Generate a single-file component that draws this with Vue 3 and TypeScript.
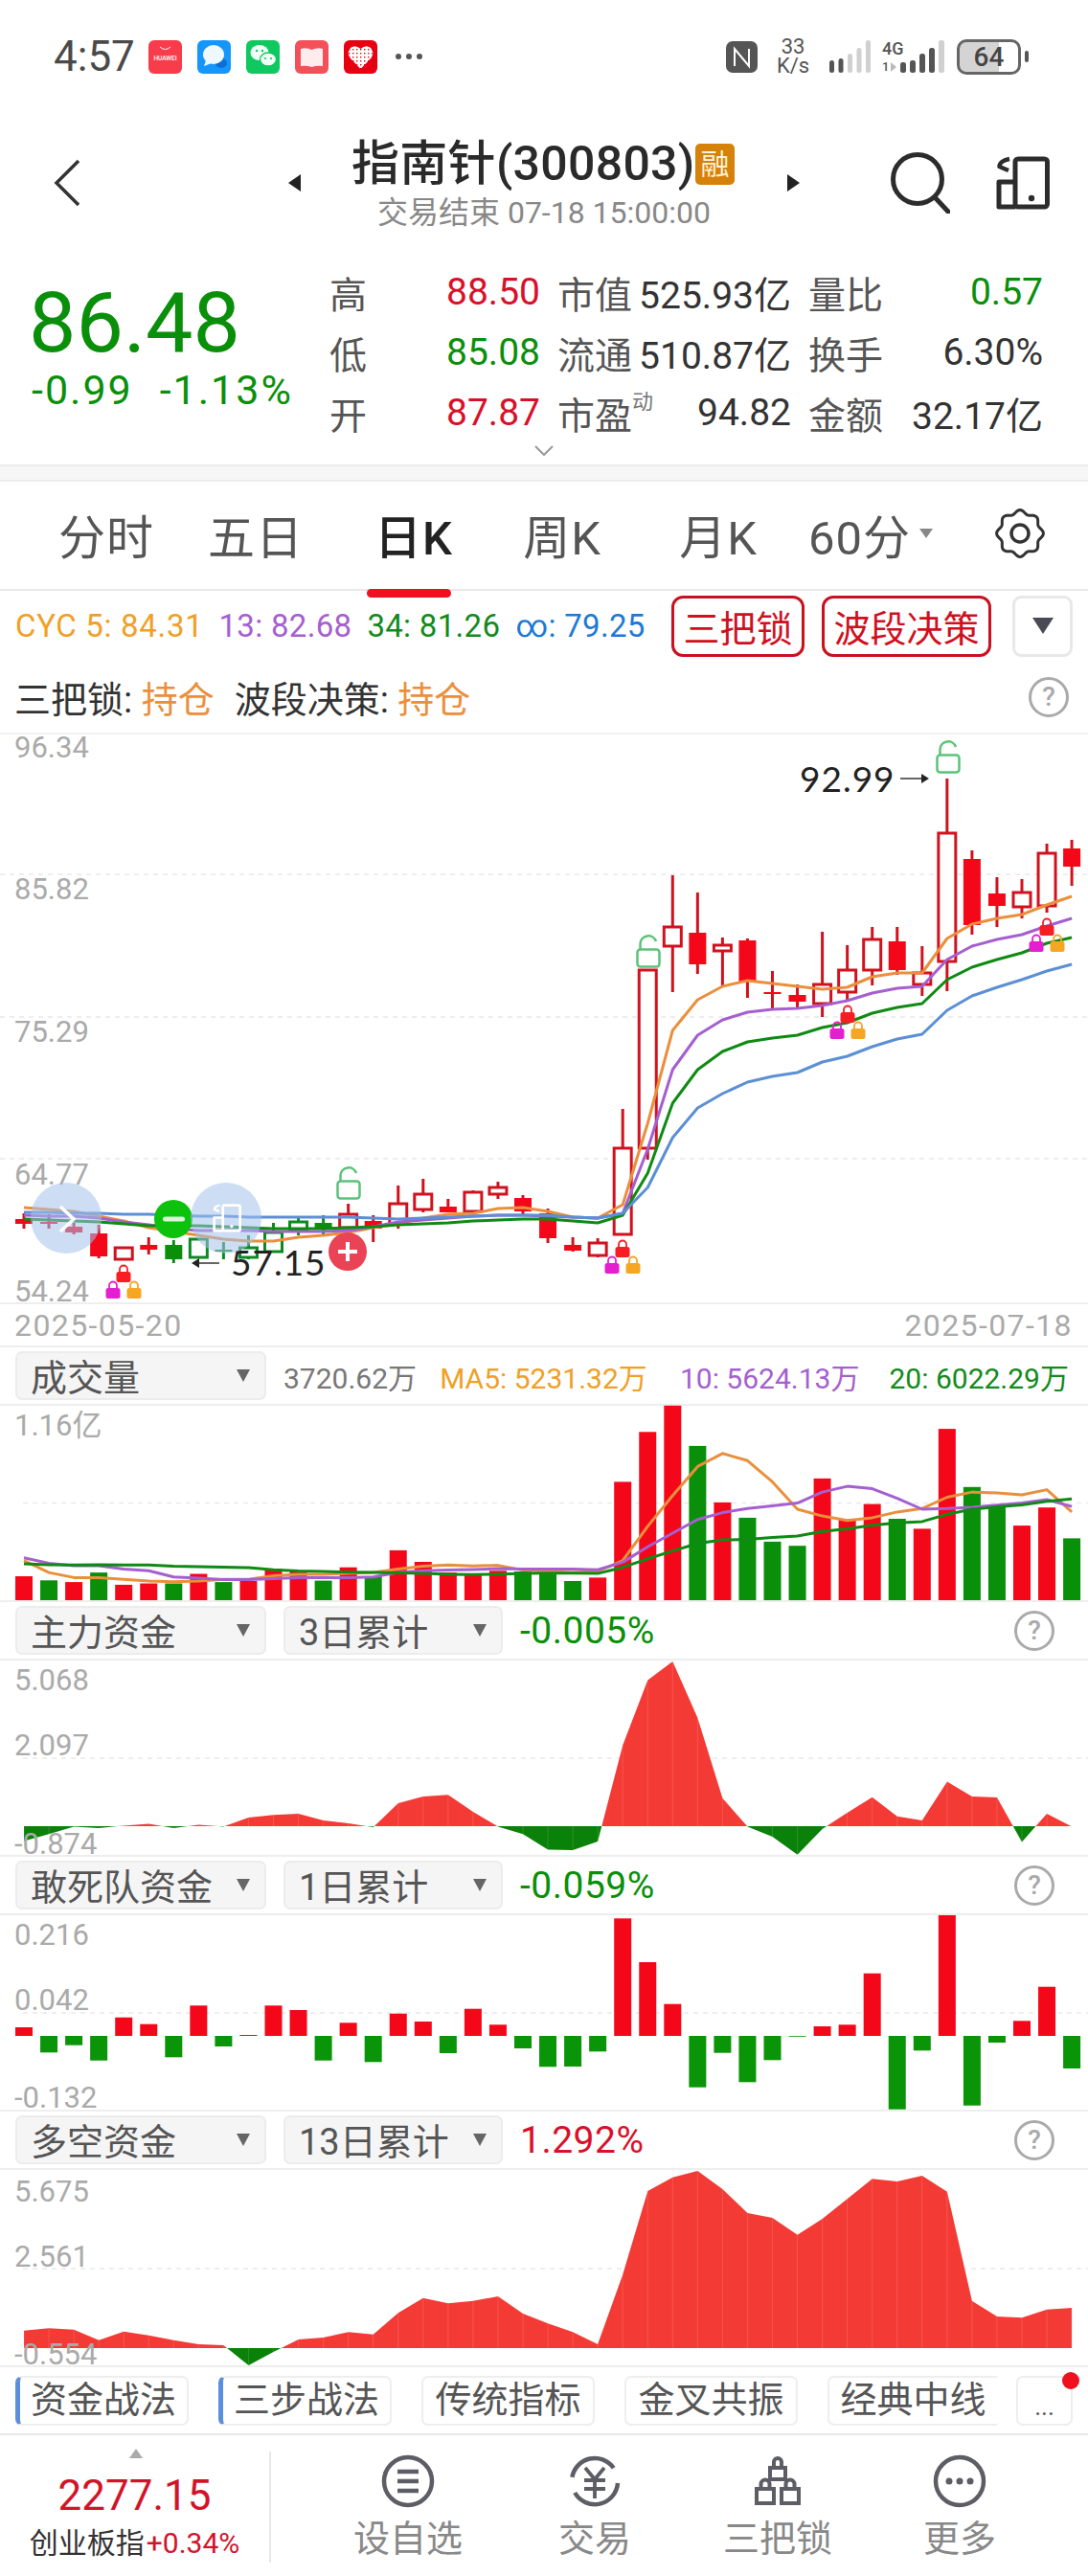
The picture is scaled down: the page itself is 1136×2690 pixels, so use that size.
<template>
  <div class="page">
    <!-- status bar -->
    <div class="status">
      <div class="status-left">
        <span class="clock">4:57</span>
        <svg class="app" viewBox="0 0 35 35"><rect width="35" height="35" rx="6" fill="#f93c4b" /><path d="M12 7q5.5 5 11 0" fill="none" stroke="#fff" stroke-width="1" /><text x="17.5" y="21" class="app-label">HUAWEI</text></svg>
        <svg class="app" viewBox="0 0 35 35"><rect width="35" height="35" rx="6" fill="#1596fb" /><ellipse cx="25" cy="24" rx="6" ry="5" fill="#0b6fd4" /><ellipse cx="17" cy="15" rx="11" ry="10" fill="#eef8ff" /><path d="M9 21l-2 6 8-3z" fill="#eef8ff" /></svg>
        <svg class="app" viewBox="0 0 35 35"><rect width="35" height="35" rx="6" fill="#0fc860" /><ellipse cx="14" cy="13" rx="9.5" ry="8" fill="#f2fff7" /><ellipse cx="23" cy="20" rx="8.5" ry="7" fill="#f2fff7" stroke="#0fc860" stroke-width="1.4" /><circle cx="11" cy="11" r="1.2" fill="#0fc860" /><circle cx="17" cy="11" r="1.2" fill="#0fc860" /><circle cx="20" cy="19" r="1.1" fill="#0fc860" /><circle cx="26" cy="19" r="1.1" fill="#0fc860" /></svg>
        <svg class="app" viewBox="0 0 35 35"><rect width="35" height="35" rx="6" fill="#f4505a" /><path d="M6 9q6-2 11.5 1q6-3 11.5-1v18q-6-1-11.5 1q-5.5-2-11.5-1z" fill="#ffeced" /></svg>
        <svg class="app" viewBox="0 0 35 35">
          <defs><pattern id="pdd" width="4" height="4" patternUnits="userSpaceOnUse"><rect width="4" height="4" fill="#fff" /><rect x="1" y="1" width="1.4" height="1.4" fill="#e60012" /></pattern></defs>
          <rect width="35" height="35" rx="6" fill="#e60012" />
          <path d="M17.5 30L6 18Q3 12 7 8q5-4 10.5 1q5.5-5 10.5-1q4 4 1 10z" fill="url(#pdd)" />
        </svg>
        <span class="more-dots"><i /><i /><i /></span>
      </div>
      <div class="status-right">
        <svg class="nfc" viewBox="0 0 33 33"><rect width="33" height="33" rx="7" fill="#555" /><path d="M9 26V8l15 18V8" fill="none" stroke="#fff" stroke-width="2" /></svg>
        <div class="speed"><span>33</span><span>K/s</span></div>
        <svg class="signal" viewBox="0 0 44 36"><rect v-for="b in signalA" :key="b.x" :x="b.x" :y="35 - b.h" width="5" :height="b.h" rx="2.5" :fill="b.on ? '#555' : '#d0d0d0'" /></svg>
        <div class="net">
          <span class="net-4g">4G</span>
          <span class="net-sub">1<i /></span>
        </div>
        <svg class="signal second" viewBox="0 0 46 36"><rect v-for="b in signalB" :key="b.x" :x="b.x" :y="35 - b.h" width="6" :height="b.h" rx="2.5" :fill="b.on ? '#555' : '#d0d0d0'" /></svg>
        <div class="battery"><span>64</span></div>
        <div class="battery-nib" />
      </div>
    </div>

    <!-- stock title -->
    <header class="nav">
      <svg class="back" viewBox="0 0 28 50"><path d="M26 2L3 25l23 23" fill="none" stroke="#333" stroke-width="3.5" /></svg>
      <svg class="tri-left" viewBox="0 0 13 18"><path d="M13 0v18L0 9z" fill="#222" /></svg>
      <div class="title-block">
        <div class="title-row"><span class="title">指南针(300803)</span><span class="badge">融</span></div>
        <div class="subtitle">交易结束 07-18 15:00:00</div>
      </div>
      <svg class="tri-right" viewBox="0 0 13 18"><path d="M0 0v18l13-9z" fill="#222" /></svg>
      <svg class="search" viewBox="0 0 62 64"><circle cx="28" cy="28" r="25.5" fill="none" stroke="#2c2c2c" stroke-width="5" /><path d="M46 47l14 15" stroke="#2c2c2c" stroke-width="5" stroke-linecap="round" /></svg>
      <svg class="phone" viewBox="0 0 56 56"><use href="#phone-glyph" /></svg>
    </header>

    <svg width="0" height="0" class="defs">
      <symbol id="phone-glyph" viewBox="0 0 56 56">
        <g fill="none" stroke="currentColor" stroke-width="5" stroke-linejoin="round">
          <rect x="20" y="3" width="33.5" height="50" rx="3" />
          <path d="M20 27H3v26h17" />
          <path d="M14 3C8 4 3.5 7 3.5 11L13 15" stroke-width="4.5" />
        </g>
        <circle cx="37" cy="44" r="3.2" fill="currentColor" />
      </symbol>
    </svg>

    <!-- quote summary -->
    <section class="quote">
      <div class="quote-main">
        <div class="price-col">
          <div class="price">86.48</div>
          <div class="change"><span>-0.99</span><span>-1.13%</span></div>
        </div>
        <div class="quote-grid">
          <div v-for="c in quoteCells" :key="c.label" class="cell">
            <span class="cell-label">{{ c.label }}<sup v-if="c.sup">{{ c.sup }}</sup></span>
            <span class="cell-value" :class="c.tone">{{ c.value }}</span>
          </div>
        </div>
      </div>
      <svg class="expand" viewBox="0 0 20 11"><path d="M1 1l9 9 9-9" fill="none" stroke="#999" stroke-width="2" /></svg>
    </section>
    <div class="band" />

    <!-- period tabs -->
    <nav class="tabs">
      <div v-for="t in periods" :key="t" class="tab"><span :class="{ active: t === '日K' }">{{ t }}</span></div>
      <div class="tab"><span>60分</span><i class="caret" /></div>
      <svg class="gear" viewBox="0 0 52 52"><path :d="gearPath" fill="none" stroke="#333" stroke-width="3" /><circle cx="26" cy="26" r="9" fill="none" stroke="#333" stroke-width="3.5" /></svg>
    </nav>

    <!-- indicators -->
    <div class="ind-row">
      <div class="ma-group">
        <span class="c-orange cyc">CYC 5: 84.31</span>
        <span class="c-purple">13: 82.68</span>
        <span class="c-green">34: 81.26</span>
        <span class="c-blue">∞: 79.25</span>
      </div>
      <button class="red-btn three">三把锁</button>
      <button class="red-btn four">波段决策</button>
      <button class="drop-btn"><i /></button>
    </div>
    <div class="signal-row">
      <span>三把锁: <b>持仓</b></span>
      <span>波段决策: <b>持仓</b></span>
      <span class="help">?</span>
    </div>

    <!-- candle chart -->
    <svg class="chart main" viewBox="0 767 1136 593">
      <line v-for="y in [913, 1062, 1210]" :key="y" x1="0" x2="1136" :y1="y" :y2="y" class="dash" />
      <g v-for="(k, i) in candles" :key="i" :class="k[5] === 'r' ? 'k-red' : 'k-green'">
        <line :x1="xAt(i)" :x2="xAt(i)" :y1="k[2]" :y2="k[3]" class="wick" />
        <rect v-if="k[4]" :x="xAt(i) - 9" :y="k[0]" width="18" :height="k[1] - k[0]" class="hollow" />
        <rect v-else :x="xAt(i) - 9" :y="k[0]" width="18" :height="k[1] - k[0]" class="solid" />
      </g>
      <polyline v-for="l in mainLines" :key="l.color" :points="l.pts" :stroke="l.color" class="ma-line" />

      <g v-for="g in lockGroups" :key="g.x">
        <g v-for="l in lockTrio(g.x, g.y)" :key="l.c" :transform="`translate(${l.x - 7.5} ${l.y})`">
          <path d="M3.5 9V5.5a4 4 0 0 1 8 0V9" fill="none" :stroke="l.c" stroke-width="1.8" />
          <rect x="0" y="8" width="15" height="11" rx="2.5" :fill="l.c" />
        </g>
      </g>
      <g v-for="o in openLocks" :key="o.x" :transform="`translate(${o.x} ${o.y})`" fill="none" stroke="#5cc27a" stroke-width="2.5">
        <rect x="1.5" y="15.5" width="23" height="18" rx="3" />
        <path d="M4.5 15V9.5a8.5 8.5 0 0 1 16.5-2.5" />
      </g>

      <text x="835" y="827" class="extreme">92.99</text>
      <path d="M940 813h23" stroke="#333" stroke-width="1.5" /><path d="M962 808l8 5-8 5z" fill="#222" />
      <text x="241" y="1332" class="extreme">57.15</text>
      <path d="M207 1319h22" stroke="#333" stroke-width="1.5" /><path d="M208 1314l-8 5 8 5z" fill="#222" />

      <text v-for="a in mainAxis" :key="a.t" x="15" :y="a.y" class="axis">{{ a.t }}</text>

      <circle cx="69" cy="1272" r="37" fill="#a3c1eb" opacity="0.55" />
      <path d="M63 1260l14 13-14 13" fill="none" stroke="#fff" stroke-width="3.5" />
      <circle cx="181" cy="1273" r="20" fill="#0cc20c" />
      <rect x="170" y="1270.5" width="23" height="5" rx="2.5" fill="#fff" opacity="0.85" />
      <circle cx="236" cy="1272" r="37" fill="#a3c1eb" opacity="0.55" />
      <svg x="222" y="1257" width="30" height="30" viewBox="0 0 56 56" color="#fff"><use href="#phone-glyph" /></svg>
      <circle cx="363" cy="1307" r="20" fill="#ea4355" />
      <path d="M363 1297v20M353 1307h20" stroke="#fff" stroke-width="4" />
    </svg>
    <div class="dates"><span>2025-05-20</span><span>2025-07-18</span></div>

    <!-- volume -->
    <div class="panel-head">
      <div class="combo w1"><span>成交量</span><i /></div>
      <div class="vol-values">
        <span class="c-gray">3720.62万</span>
        <span class="c-orange">MA5: 5231.32万</span>
        <span class="c-purple">10: 5624.13万</span>
        <span class="c-green">20: 6022.29万</span>
      </div>
    </div>
    <svg class="chart vol" viewBox="0 1467 1136 203">
      <line x1="24" x2="1136" y1="1568.5" y2="1568.5" class="dash" />
      <rect v-for="(b, i) in volBars" :key="i" :x="xAt(i) - 9" :y="b.y" width="18" :height="1670 - b.y" :fill="b.up ? '#f5071a' : '#0a8f0a'" />
      <polyline v-for="l in volLines" :key="l.color" :points="l.pts" :stroke="l.color" class="vol-line" />
      <text x="15" y="1498" class="axis">1.16亿</text>
    </svg>

    <!-- capital flow panels -->
    <template v-for="p in panels" :key="p.name">
      <div class="panel-head">
        <div class="combo w1"><span>{{ p.name }}</span><i /></div>
        <div class="combo w2"><span>{{ p.period }}</span><i /></div>
        <span class="panel-value" :class="p.up ? 'c-red' : 'c-deep-green'">{{ p.value }}</span>
        <span class="help panel-help">?</span>
      </div>
      <svg class="chart" :style="{ height: p.height + 'px' }" :viewBox="`0 ${p.top} 1136 ${p.height}`">
        <line x1="24" x2="1136" :y1="p.dash" :y2="p.dash" class="dash" />
        <template v-if="p.kind === 'area'">
          <clipPath :id="`${p.id}-up`"><rect x="0" :y="p.top" width="1136" :height="p.zero - p.top" /></clipPath>
          <clipPath :id="`${p.id}-down`"><rect x="0" :y="p.zero" width="1136" :height="p.top + p.height - p.zero" /></clipPath>
          <path :d="areaPath(p.ys, p.zero)" fill="#f43a35" :clip-path="`url(#${p.id}-up)`" />
          <path :d="areaPath(p.ys, p.zero)" fill="#0a8108" :clip-path="`url(#${p.id}-down)`" />
          <line v-for="(y, i) in p.ys" :key="i" :x1="xAt(i)" :x2="xAt(i)" :y1="y" :y2="p.zero" stroke="#fff" stroke-opacity="0.14" />
        </template>
        <template v-else>
          <rect v-for="(y, i) in p.ys" :key="i" :x="xAt(i) - 9" :y="Math.min(y, p.zero)" width="18" :height="Math.max(Math.abs(y - p.zero), 0.8)" :fill="y < p.zero ? '#f5071a' : '#0a9408'" />
        </template>
        <text v-for="a in p.axis" :key="a.t" x="15" :y="a.y" class="axis">{{ a.t }}</text>
      </svg>
    </template>

    <!-- strategy tabs -->
    <div class="strategies">
      <button v-for="s in strategies" :key="s.t" class="strategy" :class="{ marked: s.marked, open: s.open }">{{ s.t }}</button>
      <button class="strategy ellipsis">...<i class="dot" /></button>
    </div>

    <!-- footer -->
    <footer class="footer">
      <div class="index">
        <i class="index-up" />
        <div class="index-value">2277.15</div>
        <div class="index-name">创业板指<span>+0.34%</span></div>
      </div>
      <div class="actions">
        <div class="action">
          <svg viewBox="0 0 56 56"><circle cx="28" cy="28" r="25" /><path d="M17 18h22M17 28h22M17 38h22" stroke-width="4.5" /></svg>
          <span>设自选</span>
        </div>
        <div class="action">
          <svg viewBox="0 0 56 56"><path d="M47.7 14.2A24 24 0 0 0 4.4 23.8" /><path d="M52 30A24 24 0 0 1 7.2 40" /><path d="M18 14l10 12 10-12M17 27h22M17 36h22M28 26v20" stroke-width="3.8" /></svg>
          <span>交易</span>
        </div>
        <div class="action">
          <svg viewBox="0 0 56 56"><path d="M20 14h16v12H20zM24 14V8a4 4 0 0 1 8 0v6M6 36h18v15H6zM10.5 36v-5a4.5 4.5 0 0 1 9 0v5M32 36h18v15H32zM36.5 36v-5a4.5 4.5 0 0 1 9 0v5" stroke-width="4" /></svg>
          <span>三把锁</span>
        </div>
        <div class="action">
          <svg viewBox="0 0 56 56"><circle cx="28" cy="28" r="25" /><circle cx="17" cy="28" r="3.5" class="dotfill" /><circle cx="28" cy="28" r="3.5" class="dotfill" /><circle cx="39" cy="28" r="3.5" class="dotfill" /></svg>
          <span>更多</span>
        </div>
      </div>
    </footer>
  </div>
</template>

<script setup lang="ts">
type Candle = [number, number, number, number, number, 'r' | 'g']

const xAt = (i: number) => 25 + 26.05 * i

const signalA = [
  { x: 0, h: 13, on: true }, { x: 9.5, h: 15, on: true }, { x: 19, h: 20, on: false },
  { x: 28.5, h: 26, on: false }, { x: 38, h: 34, on: false },
]
const signalB = [
  { x: 0, h: 11, on: true }, { x: 10, h: 13, on: true }, { x: 20, h: 20, on: true },
  { x: 30, h: 26, on: true }, { x: 40, h: 34, on: false },
]

const quoteCells = [
  { label: '高', value: '88.50', tone: 'c-red' },
  { label: '市值', value: '525.93亿', tone: '' },
  { label: '量比', value: '0.57', tone: 'c-deep-green' },
  { label: '低', value: '85.08', tone: 'c-deep-green' },
  { label: '流通', value: '510.87亿', tone: '' },
  { label: '换手', value: '6.30%', tone: '' },
  { label: '开', value: '87.87', tone: 'c-red' },
  { label: '市盈', sup: '动', value: '94.82', tone: '' },
  { label: '金额', value: '32.17亿', tone: '' },
]

const periods = ['分时', '五日', '日K', '周K', '月K']

const gearPath = Array.from({ length: 120 }, (_, i) => {
  const a = (i / 120) * Math.PI * 2
  const r = 22.5 + 1.9 * Math.cos(8 * a)
  return `${i ? 'L' : 'M'}${(26 + r * Math.cos(a)).toFixed(2)} ${(26 + r * Math.sin(a)).toFixed(2)}`
}).join('') + 'Z'

// body top, body bottom, wick top, wick bottom, hollow, colour
const candles: Candle[] = [
  [1273, 1278, 1267, 1283, 0, 'r'], [1276, 1278, 1268, 1283, 0, 'r'], [1281, 1287, 1277, 1289, 0, 'r'],
  [1288, 1312, 1279, 1314, 0, 'r'], [1303, 1315, 1303, 1315, 1, 'r'], [1300, 1305, 1292, 1310, 0, 'r'],
  [1300, 1315, 1295, 1319, 0, 'g'], [1294, 1313, 1294, 1313, 1, 'g'], [1305, 1307, 1297, 1315, 0, 'g'],
  [1303, 1313, 1290, 1315, 1, 'g'], [1287, 1307, 1277, 1307, 1, 'g'], [1276, 1285, 1272, 1290, 1, 'g'],
  [1277, 1283, 1269, 1289, 0, 'g'], [1268, 1282, 1257, 1282, 1, 'r'], [1275, 1283, 1269, 1297, 0, 'r'],
  [1257, 1278, 1238, 1283, 1, 'r'], [1247, 1263, 1231, 1266, 1, 'r'], [1260, 1266, 1252, 1266, 0, 'r'],
  [1245, 1265, 1243, 1265, 1, 'r'], [1240, 1247, 1234, 1252, 1, 'r'], [1251, 1265, 1248, 1268, 0, 'r'],
  [1267, 1293, 1262, 1298, 0, 'r'], [1300, 1306, 1292, 1307, 0, 'r'], [1298, 1311, 1293, 1313, 1, 'r'],
  [1199, 1289, 1158, 1289, 1, 'r'], [1013, 1199, 1013, 1211, 1, 'r'], [968, 988, 914, 1036, 1, 'r'],
  [974, 1007, 932, 1017, 0, 'r'], [987, 993, 979, 1030, 1, 'r'], [982, 1025, 980, 1042, 0, 'r'],
  [1036, 1038, 1014, 1053, 0, 'r'], [1039, 1046, 1028, 1052, 0, 'r'], [1028, 1048, 973, 1062, 1, 'r'],
  [1013, 1036, 987, 1045, 1, 'r'], [981, 1013, 968, 1029, 1, 'r'], [983, 1013, 968, 1018, 0, 'r'],
  [1016, 1028, 988, 1040, 1, 'r'], [870, 1004, 813, 1035, 1, 'r'], [897, 966, 888, 976, 0, 'r'],
  [933, 946, 916, 968, 0, 'r'], [932, 947, 918, 959, 1, 'r'], [891, 946, 881, 953, 1, 'r'],
  [886, 905, 877, 925, 0, 'r'],
]

const toPoints = (ys: number[]) => ys.map((y, i) => `${xAt(i).toFixed(1)},${y}`).join(' ')

const mainLines = [
  { color: '#ea8f3c', pts: toPoints([1261, 1263, 1265, 1270, 1275, 1282, 1286, 1290, 1294, 1296, 1296, 1292, 1290, 1287, 1282, 1278, 1272, 1268, 1267, 1262, 1261, 1265, 1271, 1272, 1258, 1173, 1076, 1044, 1030, 1024, 1027, 1030, 1033, 1031, 1020, 1016, 1016, 980, 965, 959, 955, 945, 936]) },
  { color: '#a55fd0', pts: toPoints([1269, 1270, 1270, 1272, 1276, 1279, 1283, 1285, 1285, 1285, 1286, 1286, 1286, 1285, 1281, 1276, 1274, 1272, 1270, 1269, 1269, 1270, 1271, 1272, 1267, 1200, 1117, 1081, 1065, 1057, 1054, 1053, 1050, 1045, 1037, 1032, 1030, 1002, 988, 981, 976, 967, 959]) },
  { color: '#0f8a14', pts: toPoints([1273, 1274, 1275, 1276, 1278, 1280, 1280, 1280, 1281, 1282, 1283, 1283, 1283, 1282, 1281, 1279, 1278, 1277, 1275, 1274, 1273, 1273, 1275, 1277, 1269, 1225, 1152, 1117, 1098, 1088, 1084, 1081, 1073, 1068, 1058, 1052, 1048, 1023, 1010, 1002, 995, 985, 979]) },
  { color: '#5b8fd6', pts: toPoints([1266, 1266, 1267, 1267, 1268, 1268, 1269, 1270, 1270, 1271, 1271, 1271, 1271, 1271, 1272, 1273, 1272, 1271, 1270, 1269, 1269, 1269, 1271, 1272, 1267, 1240, 1188, 1157, 1142, 1130, 1124, 1120, 1109, 1103, 1093, 1085, 1080, 1055, 1040, 1031, 1023, 1014, 1007]) },
]

const mainAxis = [
  { t: '96.34', y: 791 }, { t: '85.82', y: 939 }, { t: '75.29', y: 1088 },
  { t: '64.77', y: 1237 }, { t: '54.24', y: 1359 },
]

const lockGroups = [
  { x: 129, y: 1320 }, { x: 650, y: 1294 }, { x: 885, y: 1049 }, { x: 1093, y: 958 },
]
const lockTrio = (x: number, y: number) => [
  { c: '#f81d22', x, y },
  { c: '#e41fd0', x: x - 11, y: y + 17 },
  { c: '#f5a623', x: x + 11, y: y + 17 },
]
const openLocks = [{ x: 351, y: 1218 }, { x: 664, y: 976 }, { x: 977, y: 773 }]

const volY = (v: number) => +(1400 + v / 2.8).toFixed(1)
const volTops: [number, boolean][] = [
  [686, true], [698, false], [703, true], [675, false], [711, true], [707, true], [707, false], [679, true],
  [703, false], [700, true], [664, true], [672, true], [699, false], [660, true], [686, false], [610, true],
  [644, true], [675, true], [680, true], [670, true], [672, false], [675, false], [700, false], [690, true],
  [410, true], [264, true], [187, true], [305, false], [470, true], [515, false], [585, false], [597, false],
  [400, true], [520, true], [475, true], [518, false], [547, true], [255, true], [425, false], [480, false],
  [538, true], [485, true], [575, false],
]
const volBars = volTops.map(([v, up]) => ({ y: volY(v), up }))
const volLines = [
  { color: '#ea8f3c', pts: toPoints([640, 675, 690, 690, 695, 700, 702, 700, 695, 695, 685, 680, 680, 678, 675, 665, 657, 653, 656, 654, 668, 672, 675, 672, 640, 540, 450, 365, 327, 348, 410, 490, 510, 523, 515, 498, 488, 455, 440, 442, 448, 433, 498].map(volY)) },
  { color: '#a55fd0', pts: toPoints([632, 648, 655, 655, 665, 670, 688, 692, 696, 696, 693, 690, 690, 690, 688, 675, 670, 668, 666, 664, 665, 665, 665, 667, 645, 600, 560, 520, 500, 488, 480, 472, 440, 423, 430, 458, 490, 488, 484, 478, 472, 462, 482].map(volY)) },
  { color: '#0f8a14', pts: toPoints([650, 652, 653, 652, 653, 653, 657, 658, 659, 661, 667, 671, 672, 674, 675, 676, 678, 680, 681, 680, 678, 677, 677, 678, 660, 635, 612, 590, 580, 578, 573, 568, 555, 547, 537, 530, 526, 505, 490, 483, 477, 467, 460].map(volY)) },
]

const flowA = [1460, 1440, 1418, 1422, 1415, 1410, 1422, 1413, 1418, 1392, 1384, 1380, 1400, 1408, 1420, 1350, 1330, 1325, 1375, 1418, 1440, 1485, 1487, 1462, 1180, 990, 935, 1100, 1335, 1418, 1448, 1500, 1425, 1378, 1332, 1388, 1400, 1287, 1330, 1333, 1463, 1380, 1418]
const flowB = [468, 547, 524, 572, 437, 458, 562, 400, 528, 492, 400, 414, 572, 454, 577, 425, 450, 549, 410, 460, 534, 592, 591, 544, 127, 264, 395, 656, 548, 640, 571, 497, 465, 460, 299, 725, 541, 117, 713, 516, 448, 341, 597]
const flowC = [1415, 1408, 1412, 1445, 1418, 1430, 1445, 1458, 1461, 1524, 1482, 1443, 1437, 1420, 1427, 1360, 1313, 1330, 1322, 1308, 1362, 1393, 1420, 1458, 1240, 978, 935, 915, 972, 1047, 1062, 1115, 1065, 1003, 940, 948, 930, 980, 1322, 1371, 1375, 1349, 1344]
const lowerY = (v: number) => +(1960 + v / 3).toFixed(1)

const panels = [
  {
    id: 'main-flow', name: '主力资金', period: '3日累计', value: '-0.005%', up: false, kind: 'area',
    top: 1733, height: 203, zero: 1906, dash: 1835, ys: flowA.map(volY),
    axis: [{ t: '5.068', y: 1764 }, { t: '2.097', y: 1832 }, { t: '-0.874', y: 1935 }],
  },
  {
    id: 'dare-flow', name: '敢死队资金', period: '1日累计', value: '-0.059%', up: false, kind: 'bars',
    top: 1999, height: 203, zero: 2125, dash: 2101, ys: flowB.map(lowerY),
    axis: [{ t: '0.216', y: 2030 }, { t: '0.042', y: 2098 }, { t: '-0.132', y: 2200 }],
  },
  {
    id: 'long-short', name: '多空资金', period: '13日累计', value: '1.292%', up: true, kind: 'area',
    top: 2264, height: 204, zero: 2450, dash: 2367, ys: flowC.map(lowerY),
    axis: [{ t: '5.675', y: 2297 }, { t: '2.561', y: 2365 }, { t: '-0.554', y: 2467 }],
  },
]

const areaPath = (ys: number[], zero: number) =>
  `M${xAt(0)} ${zero}` + ys.map((y, i) => `L${xAt(i).toFixed(1)} ${y}`).join('') + `L${xAt(ys.length - 1)} ${zero}Z`

const strategies = [
  { t: '资金战法', marked: true },
  { t: '三步战法', marked: true },
  { t: '传统指标' },
  { t: '金叉共振' },
  { t: '经典中线', open: true },
]
</script>

<style scoped>
.page {
  width: 1136px;
  height: 2690px;
  overflow: hidden;
  background: #fff;
  color: #333;
  font-family: Roboto, "Noto Sans CJK SC", sans-serif;
}

i { font-style: normal; display: block; }
button { font-family: inherit; padding: 0; cursor: pointer; }
.defs { position: absolute; }

.c-orange { color: #f0a026; }
.c-purple { color: #a55fd0; }
.c-green { color: #138a1c; }
.c-blue { color: #1c7ad6; }
.c-gray { color: #777; }
.c-red { color: #d8102a; }
.c-deep-green { color: #0a8f0a; }

/* status bar */
.status {
  height: 118px;
  display: flex;
  align-items: center;
  justify-content: space-between;
  padding: 0 62px 0 56px;
  box-sizing: border-box;
}
.status-left, .status-right { display: flex; align-items: center; }
.clock { font-size: 44px; color: #4a4a4a; width: 99px; line-height: 44px; }
.app { width: 35px; height: 35px; margin-right: 16px; }
.app-label { font-size: 6.5px; fill: #fff; text-anchor: middle; font-weight: 500; }
.more-dots { display: flex; gap: 5px; margin-left: 3px; }
.more-dots i { width: 6px; height: 6px; border-radius: 50%; background: #555; }
.nfc { width: 33px; height: 33px; margin-right: 21px; }
.speed {
  display: flex; flex-direction: column; align-items: center; width: 32px;
  font-size: 22px; line-height: 20px; color: #555; margin-right: 22px;
}
.signal { width: 44px; height: 36px; }
.signal.second { width: 46px; margin-left: -6px; margin-right: 13px; }
.net { width: 25px; margin-left: 11px; color: #555; }
.net-4g { display: block; font-size: 18px; font-weight: 500; line-height: 18px; }
.net-sub { display: flex; align-items: center; font-size: 13px; line-height: 14px; margin-top: 3px; font-weight: 500; }
.net-sub i { width: 0; height: 0; border-left: 6px solid #bbb; border-top: 5px solid transparent; border-bottom: 5px solid transparent; margin-left: 2px; }
.battery {
  width: 67px; height: 37px; box-sizing: border-box;
  border: 3px solid #666; border-radius: 10px;
  background: linear-gradient(90deg, #d4d4d4 68%, #fff 68%);
  display: flex; align-items: center; justify-content: center;
  font-size: 28px; font-weight: 500; color: #444;
}
.battery-nib { width: 4px; height: 12px; background: #555; border-radius: 2px; margin-left: 4px; }

/* title */
.nav {
  height: 154px;
  padding: 0 0 8px 56px;
  box-sizing: border-box;
  display: flex;
  align-items: center;
}
.back { width: 28px; height: 50px; }
.tri-left { width: 13px; height: 18px; margin-left: 217px; }
.title-block { width: 400px; margin-left: 54px; display: flex; flex-direction: column; align-items: center; }
.title-row { display: flex; align-items: center; height: 58px; }
.title { font-size: 50px; font-weight: 500; color: #2a2a2a; line-height: 58px; width: 359px; white-space: nowrap; letter-spacing: 0.3px; margin-left: -2px; }
.badge {
  width: 41px; height: 43px; border-radius: 5px; background: #d6810a;
  color: #fff3dc; font-size: 30px; line-height: 43px; text-align: center;
}
.subtitle { font-size: 32px; line-height: 36px; color: #888; margin-top: 4px; white-space: nowrap; }
.tri-right { width: 13px; height: 18px; margin-left: 54px; }
.search { width: 62px; height: 64px; margin-left: 95px; }
.phone { width: 56px; height: 56px; margin-left: 48px; color: #2c2c2c; }

/* quote */
.quote { height: 213px; display: flex; flex-direction: column; align-items: center; }
.quote-main { width: 100%; height: 193px; display: flex; }
.price-col { width: 314px; margin-left: 30px; padding-top: 22px; box-sizing: border-box; color: #0a8f0a; }
.price { font-size: 88px; line-height: 86px; }
.change { display: flex; gap: 28px; font-size: 43px; line-height: 48px; margin-top: 3px; margin-left: 3px; letter-spacing: 2px; }
.quote-grid {
  display: grid;
  grid-template-columns: 220px 244px 245px;
  grid-auto-rows: 63px;
  column-gap: 18px;
  padding-top: 1px;
}
.cell { display: flex; align-items: center; justify-content: space-between; }
.cell-label { font-size: 39px; color: #555; position: relative; }
.cell-label sup { font-size: 22px; color: #777; position: absolute; left: 78px; top: 2px; line-height: 30px; }
.cell-value { font-size: 39px; }
.expand { width: 20px; height: 11px; margin-top: 0; }
.band { height: 18px; box-sizing: border-box; background: #f6f6f6; border-top: 2px solid #ececec; border-bottom: 2px solid #ececec; }

/* period tabs */
.tabs {
  height: 114px;
  box-sizing: border-box;
  border-bottom: 2px solid #e8e8e8;
  padding: 0 0 4px 33px;
  display: grid;
  grid-template-columns: 156px 156px 174px 136px 190px 128px 118px;
  align-items: center;
  font-size: 49px;
  letter-spacing: 1px;
  color: #555;
}
.tab { display: flex; justify-content: center; align-items: center; white-space: nowrap; }
.tab .active { color: #222; font-weight: 500; position: relative; }
.tab .active::after {
  content: '';
  position: absolute;
  left: -8px; right: 2px; bottom: -31px;
  height: 9px; border-radius: 5px; background: #f01020;
}
.caret { width: 0; height: 0; border-left: 7px solid transparent; border-right: 7px solid transparent; border-top: 10px solid #888; margin-left: 9px; }
.gear { width: 52px; height: 52px; justify-self: end; }

/* indicators */
.ind-row { height: 73px; display: flex; align-items: center; padding-left: 16px; }
.ma-group { width: 685px; display: flex; gap: 16px; font-size: 33px; letter-spacing: 0.3px; white-space: nowrap; }
.ma-group .cyc { letter-spacing: 0.7px; }
.red-btn {
  height: 64px; box-sizing: border-box;
  background: #fff; border: 3px solid #c9111f; border-radius: 12px;
  color: #cf1020; font-size: 38px;
}
.red-btn.three { width: 139px; }
.red-btn.four { width: 177px; margin-left: 18px; }
.drop-btn {
  width: 63px; height: 64px; margin-left: 22px; box-sizing: border-box;
  background: #fff; border: 3px solid #e8e8e8; border-radius: 9px;
  display: flex; align-items: center; justify-content: center;
}
.drop-btn i { width: 0; height: 0; border-left: 11px solid transparent; border-right: 11px solid transparent; border-top: 17px solid #4a4a55; }
.signal-row {
  height: 77px; box-sizing: border-box;
  border-bottom: 2px solid #f2f2f2;
  display: flex; align-items: center; gap: 21px;
  padding: 0 20px 0 15px;
  font-size: 38px; color: #333;
}
.signal-row b { font-weight: 400; color: #ec8f3a; }
.help {
  width: 42px; height: 42px; box-sizing: border-box;
  border: 3.5px solid #aaa; border-radius: 50%;
  display: flex; align-items: center; justify-content: center;
  color: #aaa; font-size: 28px; font-weight: 500; line-height: 1;
}
.signal-row .help { margin-left: auto; }

/* charts */
.chart { display: block; width: 1136px; overflow: visible; }
.chart.main { height: 593px; }
.chart.vol { height: 203px; }
.dash { stroke: #e9e9e9; stroke-width: 1.5; stroke-dasharray: 5 5; }
.wick { stroke-width: 3px; }
.k-red .wick, .k-red .hollow { stroke: #d0121f; }
.k-red .solid { fill: #f5071a; }
.k-green .wick, .k-green .hollow { stroke: #0c8a22; }
.k-green .solid { fill: #0a8f0a; }
.hollow { fill: #fff; stroke-width: 3px; }
.ma-line { fill: none; stroke-width: 3px; stroke-linejoin: round; }
.vol-line { fill: none; stroke-width: 3px; stroke-linejoin: round; }
.axis { font-size: 31px; fill: #aaa; }
.extreme { font-size: 37px; fill: #222; letter-spacing: 1px; font-family: Lato, Roboto, sans-serif; }
.dates {
  height: 45px; box-sizing: border-box;
  border-top: 2px solid #eee;
  display: flex; justify-content: space-between;
  padding: 4px 16px 0 15px;
  font-size: 32px; line-height: 36px; color: #aaa; letter-spacing: 1.4px;
}

/* panels */
.panel-head {
  height: 63px; box-sizing: border-box;
  border-bottom: 2px solid #eee;
  border-top: 2px solid #eee;
  display: flex; align-items: center; gap: 18px;
  padding-left: 16px;
}
.combo {
  height: 51px; box-sizing: border-box;
  background: #f5f5f5; border: 2px solid #ececec; border-radius: 7px;
  display: flex; align-items: center; justify-content: space-between;
  padding: 0 15px 3px 14px;
  font-size: 38px; color: #555;
  white-space: nowrap;
}
.combo i { width: 0; height: 0; border-left: 7.5px solid transparent; border-right: 7.5px solid transparent; border-top: 13px solid #666; margin-top: 3px; }
.combo.w1 { width: 262px; }
.combo.w2 { width: 229px; }
.panel-value { font-size: 39px; letter-spacing: 0.5px; }
.panel-help { margin-left: auto; margin-right: 35px; }
.vol-values { flex: 1; display: flex; justify-content: space-between; padding-right: 20px; font-size: 30px; white-space: nowrap; }
.vol-values .c-orange { margin-left: -7px; margin-right: 3px; }

/* strategy tabs */
.strategies {
  height: 73px; box-sizing: border-box;
  border-top: 2px solid #eee;
  border-bottom: 2px solid #e8e8e8;
  display: flex; gap: 31px;
  padding: 9px 0 0 16px;
}
.strategy {
  width: 181px; height: 52px; box-sizing: border-box;
  background: #fff; border: 2px solid #eee; border-radius: 7px;
  font-size: 38px; color: #555; line-height: 1;
  padding-bottom: 3px;
  position: relative;
}
.strategy.marked { border-left: 5px solid #5b8edb; }
.strategy.open { width: 177px; border-right: none; border-radius: 7px 0 0 7px; }
.strategy.ellipsis { width: 59px; margin-left: -11px; font-size: 26px; padding-top: 12px; padding-bottom: 0; }
.dot { position: absolute; right: -9px; top: -6px; width: 18px; height: 18px; border-radius: 50%; background: #f01020; }

/* footer */
.footer { display: flex; height: 149px; }
.index {
  width: 283px; height: 116px; margin-top: 17px; box-sizing: border-box;
  border-right: 2px solid #e8e8e8;
  display: flex; flex-direction: column; align-items: center;
  position: relative;
}
.index-up { position: absolute; left: 135px; top: -3px; width: 0; height: 0; border-left: 7px solid transparent; border-right: 7px solid transparent; border-bottom: 10px solid #aaa; }
.index-value { font-size: 44px; line-height: 50px; margin-top: 21px; color: #d2142a; }
.index-name { font-size: 30px; line-height: 36px; margin-top: 7px; color: #333; white-space: nowrap; }
.index-name span { color: #d2142a; margin-left: 2px; }
.actions { display: grid; grid-template-columns: 198px 192px 190px 190px; margin-left: 44px; }
.action { display: flex; flex-direction: column; align-items: center; padding-top: 20px; font-size: 38px; color: #888; }
.action svg { width: 56px; height: 56px; fill: none; stroke: #5d5d66; stroke-width: 4.5; }
.action .dotfill { fill: #5d5d66; stroke: none; }
.action span { line-height: 44px; margin-top: 10px; white-space: nowrap; }
</style>
